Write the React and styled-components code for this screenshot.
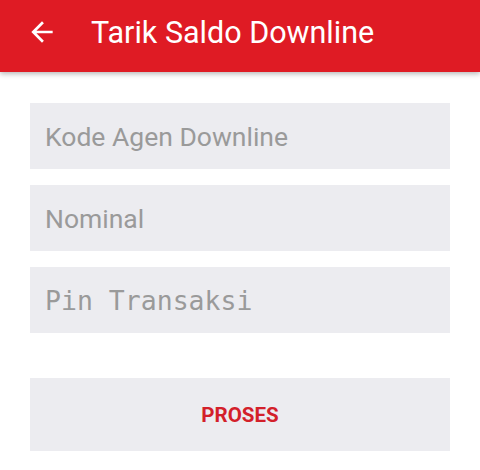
import React from "react";
import styled, { createGlobalStyle } from "styled-components";

const GlobalStyle = createGlobalStyle`
  html, body {
    margin: 0;
    padding: 0;
    background: #ffffff;
  }
  body {
    font-family: Roboto, "Noto Sans", sans-serif;
  }
`;

const Screen = styled.div`
  width: 480px;
  height: 470px;
  background: #ffffff;
  overflow: hidden;
`;

const Toolbar = styled.div`
  height: 72px;
  background-color: #df1b24;
  display: flex;
  align-items: center;
  padding-left: 26px;
  gap: 33px;
  box-shadow: 0 2px 5px rgba(0, 0, 0, 0.28);
  position: relative;
`;

const BackButton = styled.div`
  width: 32px;
  height: 32px;
  display: flex;
  align-items: center;
  justify-content: center;
  margin-top: -8px;
`;

const Title = styled.div`
  font-size: 30.5px;
  color: #ffffff;
  margin-top: -8px;
`;

const Form = styled.div`
  display: flex;
  flex-direction: column;
  gap: 16px;
  padding: 31px 30px 0 30px;
`;

const Field = styled.div`
  height: 66px;
  background-color: #ececf0;
  display: flex;
  align-items: center;
  padding-left: 15px;
  font-family: ${(props) =>
    props.mono ? `"DejaVu Sans Mono", monospace` : `Roboto, sans-serif`};
  font-size: 26.5px;
  color: #9a9a9a;
`;

const Button = styled.div`
  height: 73px;
  margin-top: 29px;
  background-color: #ececf0;
  display: flex;
  align-items: center;
  justify-content: center;
  font-family: Roboto, sans-serif;
  font-weight: bold;
  font-size: 20.5px;
  color: #d3202a;
`;

const App = () => {
  return (
    <Screen>
      <GlobalStyle />
      <Toolbar>
        <BackButton>
          <svg width="32" height="32" viewBox="0 0 24 24">
            <path
              fill="#ffffff"
              d="M20 11H7.83l5.59-5.59L12 4l-8 8 8 8 1.41-1.41L7.83 13H20v-2z"
            />
          </svg>
        </BackButton>
        <Title>Tarik Saldo Downline</Title>
      </Toolbar>
      <Form>
        <Field>Kode Agen Downline</Field>
        <Field>Nominal</Field>
        <Field mono>Pin Transaksi</Field>
        <Button>PROSES</Button>
      </Form>
    </Screen>
  );
};

export default App;
